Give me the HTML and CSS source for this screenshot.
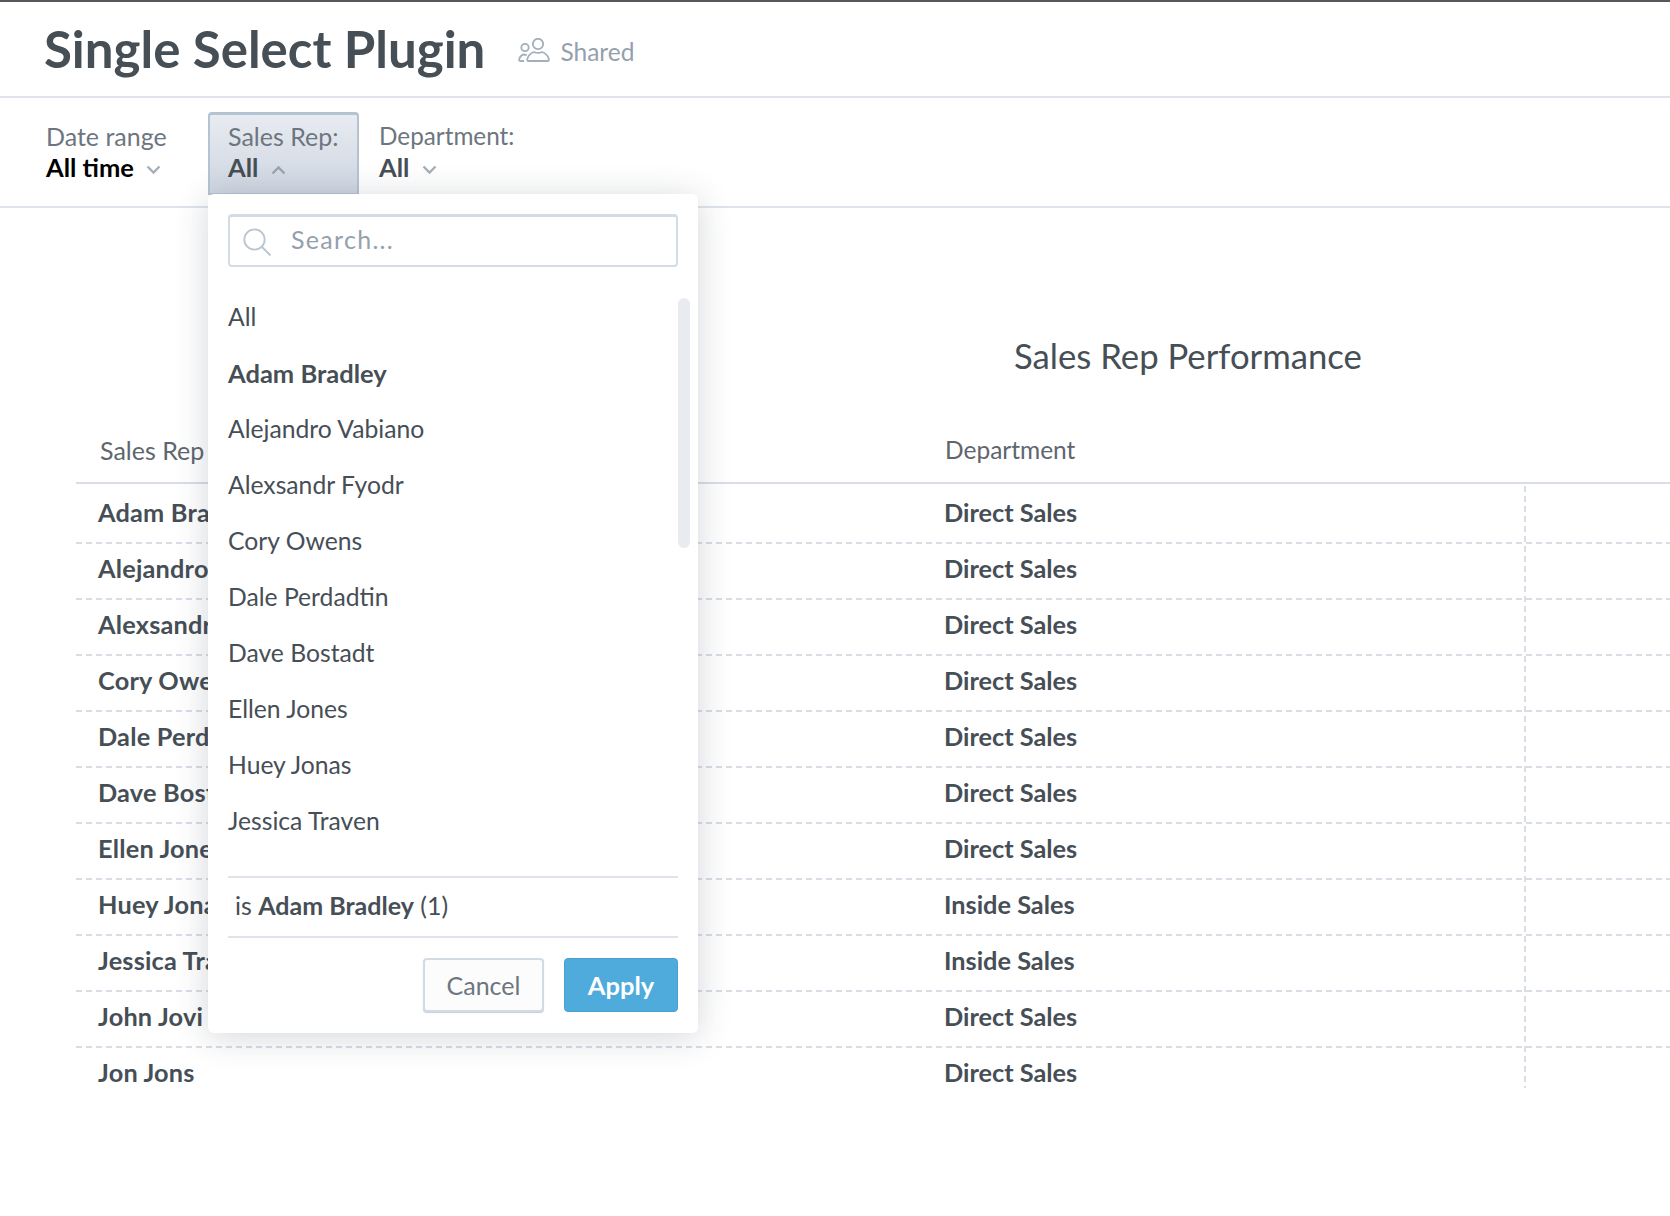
FILE: index.html
```html
<!doctype html>
<html lang="en">
<head>
    <meta charset="UTF-8">
    <title>Single Select Plugin</title>
    <link rel="stylesheet" href="styles.css">
</head>
<body>

<header class="page-header">
    <h1 class="page-title">Single Select Plugin</h1>
    <span class="shared">
        <svg class="shared-icon" width="32" height="24" viewBox="0 0 32 24" fill="none" stroke="#a3afbb" stroke-width="1.800">
            <circle cx="20" cy="6" r="5.200"/>
            <circle cx="7" cy="9.500" r="3.700"/>
            <path d="M10.500 23c-1 0-1.500-.7-1.200-2 .8-3.500 3.700-6 6.700-7 2.500 1.200 5.500 1.200 8 0 3 1 6 3.500 6.800 7 .3 1.300-.2 2-1.200 2z"/>
            <path d="M6 23H2.500c-1 0-1.500-.6-1.300-1.600.5-2.400 2-4.100 4.100-5 1.100.5 2.400.6 3.500.3"/>
        </svg>
        Shared
    </span>
</header>

<div class="filter-bar">
    <div class="filter filter-first">
        <div class="filter-label">Date range</div>
        <div class="filter-value filter-value-dark">All time
            <svg class="chevron" width="15" height="10" viewBox="0 0 15 10"><path d="M1.500 1.500l6 6 6-6" fill="none" stroke="#a3afbb" stroke-width="2.400"/></svg>
        </div>
    </div>
    <div class="filter filter-open">
        <div class="filter-label">Sales Rep:</div>
        <div class="filter-value">All
            <svg class="chevron" width="15" height="10" viewBox="0 0 15 10"><path d="M1.500 8.500l6-6 6 6" fill="none" stroke="#98a4b0" stroke-width="2.400"/></svg>
        </div>
    </div>
    <div class="filter">
        <div class="filter-label filter-label-tight">Department:</div>
        <div class="filter-value">All
            <svg class="chevron" width="15" height="10" viewBox="0 0 15 10"><path d="M1.500 1.500l6 6 6-6" fill="none" stroke="#a3afbb" stroke-width="2.400"/></svg>
        </div>
    </div>
</div>

<main class="report">
    <h2 class="report-title">Sales Rep Performance</h2>
    <div class="table">
        <div class="row row-head">
            <div class="cell-head cell-head-name">Sales Rep</div>
            <div class="cell-head cell-head-dept">Department</div>
        </div>
        <div class="row row-first"><div class="cell cell-name">Adam Bradley</div><div class="cell">Direct Sales</div></div>
        <div class="row"><div class="cell cell-name">Alejandro Vabiano</div><div class="cell">Direct Sales</div></div>
        <div class="row"><div class="cell cell-name">Alexsandr Fyodr</div><div class="cell">Direct Sales</div></div>
        <div class="row"><div class="cell cell-name">Cory Owens</div><div class="cell">Direct Sales</div></div>
        <div class="row"><div class="cell cell-name">Dale Perdadtin</div><div class="cell">Direct Sales</div></div>
        <div class="row"><div class="cell cell-name">Dave Bostadt</div><div class="cell">Direct Sales</div></div>
        <div class="row"><div class="cell cell-name">Ellen Jones</div><div class="cell">Direct Sales</div></div>
        <div class="row"><div class="cell cell-name">Huey Jonas</div><div class="cell">Inside Sales</div></div>
        <div class="row"><div class="cell cell-name">Jessica Traven</div><div class="cell">Inside Sales</div></div>
        <div class="row"><div class="cell cell-name">John Jovi</div><div class="cell">Direct Sales</div></div>
        <div class="row row-last"><div class="cell cell-name">Jon Jons</div><div class="cell">Direct Sales</div></div>
    </div>
</main>

<div class="dropdown">
    <div class="search">
        <svg class="search-icon" width="30" height="30" viewBox="0 0 30 30" fill="none" stroke="#b9c6d2" stroke-width="1.800">
            <circle cx="11.500" cy="11.500" r="10.200"/>
            <path d="M18.500 18.500l9 9"/>
        </svg>
        <span class="search-text">Search...</span>
    </div>
    <div class="list-wrap">
        <ul class="list">
            <li>All</li>
            <li class="selected">Adam Bradley</li>
            <li>Alejandro Vabiano</li>
            <li>Alexsandr Fyodr</li>
            <li>Cory Owens</li>
            <li>Dale Perdadtin</li>
            <li>Dave Bostadt</li>
            <li>Ellen Jones</li>
            <li>Huey Jonas</li>
            <li>Jessica Traven</li>
        </ul>
        <div class="scrollbar"></div>
    </div>
    <div class="summary">is <b>Adam Bradley</b> (1)</div>
    <div class="actions">
        <button class="btn btn-cancel">Cancel</button>
        <button class="btn btn-apply">Apply</button>
    </div>
</div>

</body>
</html>
```

FILE: styles.css
```css
* {
    box-sizing: border-box;
}

html, body {
    height: 100%;
}

body {
    margin: 0;
    overflow: hidden;
    background-color: #fff;
    border-top: 2px solid #55585d;
    font-family: Lato, "Open Sans", sans-serif;
    color: #464e56;
    position: relative;
}

.page-header {
    height: 96px;
    display: flex;
    align-items: center;
    padding-left: 44px;
    border-bottom: 2px solid #e0e4ea;
}

.page-title {
    margin: 0;
    font-size: 51px;
    font-weight: 700;
    line-height: 60px;
    margin-top: -1px;
}

.shared {
    display: flex;
    align-items: center;
    margin-left: 33px;
    padding-top: 4px;
    font-size: 24.500px;
    color: #94a1ad;
}

.shared-icon {
    margin-right: 10px;
    margin-top: -2px;
}

.filter-bar {
    height: 110px;
    display: flex;
    padding-left: 46px;
    border-bottom: 2px solid #dfe4eb;
}

.filter {
    padding: 9px 20px 0;
    height: 83px;
    margin-top: 14px;
}

.filter-first {
    padding-left: 0;
    padding-right: 0;
    width: 162px;
}

.filter-open {
    width: 151px;
    padding: 6px 18px 0;
    border: 2px solid #b4c3d2;
    border-top-width: 3px;
    border-radius: 4px 4px 0 0;
    background: linear-gradient(#e8ebf1, #ced6e1);
}

.filter-label {
    font-size: 25px;
    line-height: 30px;
    color: #6d7680;
    white-space: nowrap;
}

.filter-label-tight {
    font-size: 24.300px;
}

.filter-value {
    font-size: 25.500px;
    font-weight: 700;
    line-height: 32px;
    color: #464e56;
}

.filter-value-dark {
    color: #000;
}

.chevron {
    margin-left: 6px;
    vertical-align: 2px;
}

.report-title {
    margin: 0;
    padding: 128px 0 0 1014px;
    font-size: 34.700px;
    font-weight: 400;
    line-height: 40px;
    white-space: nowrap;
}

.table {
    position: relative;
    margin-left: 76px;
}

/* vertical dashed line in the last column */
.table::after {
    content: "";
    position: absolute;
    left: 1448px;
    top: 110px;
    width: 2px;
    height: 602px;
    background: linear-gradient(#d8dde6 6px, transparent 6px) 0 0 / 2px 10px repeat-y;
}

.row {
    display: grid;
    grid-template-columns: 868px 1fr;
    height: 56px;
    padding-bottom: 8px;
    align-items: center;
    background: linear-gradient(to right, #d8dde6 6px, transparent 6px) 0 100% / 10px 2px repeat-x;
}

.row-head {
    height: 108px;
    align-items: end;
    padding-bottom: 16px;
    background: none;
    border-bottom: 2px solid #d8dde6;
}

.row-first {
    height: 60px;
    padding-bottom: 4px;
}

.row-last {
    background: none;
}

.cell-head {
    font-size: 25px;
    line-height: 32px;
    color: #5e666e;
}

.cell-head-name {
    padding-left: 24px;
}

.cell-head-dept {
    padding-left: 1px;
    font-size: 24.500px;
}

.cell {
    font-size: 25.300px;
    font-weight: 700;
    white-space: nowrap;
    overflow: hidden;
}

.cell-name {
    padding-left: 22px;
    letter-spacing: 0.2px;
}

.dropdown {
    position: absolute;
    left: 208px;
    top: 192px;
    width: 490px;
    height: 839px;
    padding: 20px 20px 0 20px;
    background-color: #fff;
    border-radius: 6px;
    box-shadow: 0 4px 34px rgba(40, 50, 70, 0.2);
}

.search {
    height: 53px;
    display: flex;
    align-items: center;
    padding-left: 13px;
    border: 2px solid #d3dce5;
    border-top-width: 3px;
    border-radius: 4px;
}

.search-icon {
    margin-top: 4px;
}

.search-text {
    margin-left: 18px;
    margin-top: -4px;
    font-size: 25px;
    letter-spacing: 1.300px;
    color: #94a1ad;
}

.list-wrap {
    position: relative;
    height: 609px;
}

.list {
    margin: 0;
    padding: 22px 0 0;
    list-style: none;
}

.list li {
    height: 56px;
    line-height: 56px;
    font-size: 24.700px;
    color: #464e56;
}

.list .selected {
    font-size: 25.500px;
    font-weight: 700;
}

.scrollbar {
    position: absolute;
    right: -12px;
    top: 31px;
    width: 12px;
    height: 250px;
    border-radius: 6px;
    background-color: #e8ebf0;
}

.summary {
    height: 62px;
    padding-left: 7px;
    font-size: 25px;
    line-height: 54px;
    border-top: 2px solid #e0e4ea;
    border-bottom: 2px solid #e0e4ea;
}

.actions {
    display: flex;
    justify-content: flex-end;
    gap: 20px;
    padding-top: 20px;
}

.btn {
    height: 54px;
    border-radius: 4px;
    font-family: Lato, "Open Sans", sans-serif;
    font-size: 25px;
}

.btn-cancel {
    width: 121px;
    color: #6d7680;
    background-color: #fcfcfd;
    border: 2px solid #d2dbe3;
    box-shadow: 0 1px 1px #c2cfdb;
}

.btn-apply {
    width: 114px;
    color: #fff;
    font-size: 25.500px;
    font-weight: 700;
    background-color: #4fabdb;
    border: 1px solid #47a0cf;
}
```
